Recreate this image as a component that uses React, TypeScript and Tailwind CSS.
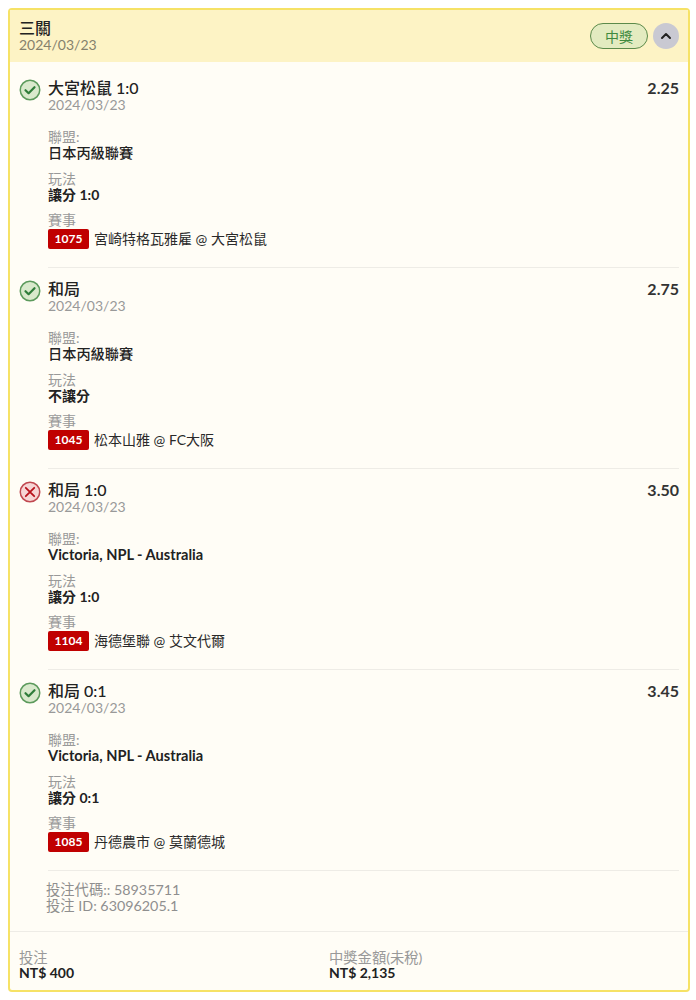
import React from 'react';
import { ChevronUp } from 'lucide-react';

interface Leg {
  title: string;
  odds: string;
  league: string;
  latin: boolean;
  play: string;
  code: string;
  match: string;
  won: boolean;
}

const legs: Leg[] = [
  { title: '大宮松鼠 1:0', odds: '2.25', league: '日本丙級聯賽', latin: false, play: '讓分 1:0', code: '1075', match: '宮崎特格瓦雅雇 @ 大宮松鼠', won: true },
  { title: '和局', odds: '2.75', league: '日本丙級聯賽', latin: false, play: '不讓分', code: '1045', match: '松本山雅 @ FC大阪', won: true },
  { title: '和局 1:0', odds: '3.50', league: 'Victoria, NPL - Australia', latin: true, play: '讓分 1:0', code: '1104', match: '海德堡聯 @ 艾文代爾', won: false },
  { title: '和局 0:1', odds: '3.45', league: 'Victoria, NPL - Australia', latin: true, play: '讓分 0:1', code: '1085', match: '丹德農市 @ 莫蘭德城', won: true },
];

const StatusIcon = ({ won }: { won: boolean }) =>
  won ? (
    <svg width="22" height="22" viewBox="0 0 22 22" fill="none">
      <circle cx="11" cy="11" r="9.75" fill="#d9e9cc" stroke="#5c9a5c" strokeWidth="1.5" />
      <path d="M6.5 11.2l3.1 3 5.9-6" stroke="#2f7d3a" strokeWidth="2.2" strokeLinecap="round" strokeLinejoin="round" />
    </svg>
  ) : (
    <svg width="22" height="22" viewBox="0 0 22 22" fill="none">
      <circle cx="11" cy="11" r="9.75" fill="#f6d5d5" stroke="#c0474f" strokeWidth="1.5" />
      <path d="M6.8 6.8l8.4 8.4M15.2 6.8l-8.4 8.4" stroke="#b8121b" strokeWidth="1.8" strokeLinecap="round" />
    </svg>
  );

const LegRow = ({ leg, last }: { leg: Leg; last: boolean }) => (
  <div className="flex">
    <div className="w-[38px] shrink-0 pl-[8.5px]">
      <StatusIcon won={leg.won} />
    </div>
    <div className={`flex-1 pb-[18px] ${last ? '' : 'mb-[12px]'} border-b border-[#eeece6]`}>
      <div className="flex justify-between">
        <div>
          <div className="text-[16px] leading-[18px] font-medium text-[#222]">{leg.title}</div>
          <div className="text-[14px] leading-[15px] text-[#999]">2024/03/23</div>
        </div>
        <div className="text-[16px] leading-[18px] font-bold text-[#333]">{leg.odds}</div>
      </div>
      <div className="mt-[17px] text-[14px] leading-[16px] text-[#999]">聯盟:</div>
      <div className={`${leg.latin ? 'text-[14.6px] font-bold' : 'text-[14.2px] font-medium'} leading-[16px] text-[#222]`}>{leg.league}</div>
      <div className="mt-[10px] text-[14px] leading-[16px] text-[#999]">玩法</div>
      <div className="text-[14px] leading-[16px] font-bold text-[#222]">{leg.play}</div>
      <div className="mt-[9px] text-[14px] leading-[16px] text-[#999]">賽事</div>
      <div className="flex items-center gap-[5px] mt-[1px]">
        <span className="w-[41px] h-[20px] flex items-center justify-center rounded-[2px] bg-[#c00000] text-white text-[12px] font-bold">{leg.code}</span>
        <span className="text-[14px] leading-[20px] text-[#2a2a2a]">{leg.match}</span>
      </div>
    </div>
  </div>
);

export default function App() {
  return (
    <div className="w-[696px] h-[1000px] bg-white p-[8px]" style={{ fontFamily: 'Lato, "Noto Sans CJK TC", sans-serif' }}>
      <div className="h-[984px] w-[682px] flex flex-col border-2 border-[#f6e266] rounded-[4px] bg-[#fffdf6]">
        <div className="h-[52px] shrink-0 bg-[#fdf3c5] flex items-center justify-between pl-[9px] pr-[9px]">
          <div className="-mt-[1px]">
            <div className="text-[16px] leading-[18px] font-medium text-[#222]">三關</div>
            <div className="text-[14px] leading-[16px] text-[#85816c]">2024/03/23</div>
          </div>
          <div className="flex items-center gap-[5px]">
            <span className="w-[58px] h-[26px] flex items-center justify-center rounded-full border border-[#5c8a4a] bg-[#e3ebc0] text-[14px] text-[#3f8a3f]">中獎</span>
            <span className="w-[26px] h-[26px] flex items-center justify-center rounded-full bg-[#c9c9d2] text-[#222]">
              <ChevronUp size={16} strokeWidth={3} />
            </span>
          </div>
        </div>
        <div className="flex-1 flex flex-col pt-[17px] pr-[9px]">
          {legs.map((leg, i) => (
            <LegRow key={leg.code} leg={leg} last={i === legs.length - 1} />
          ))}
          <div className="pl-[36px] pt-[11px] text-[14.3px] leading-[16px] text-[#8f8f8f]">
            <div>投注代碼:: 58935711</div>
            <div>投注 ID: 63096205.1</div>
          </div>
        </div>
        <div className="h-[59px] shrink-0 border-t border-[#eeece6] flex pt-[18px] pl-[9px]">
          <div className="w-[310px]">
            <div className="text-[14.3px] leading-[15px] text-[#999]">投注</div>
            <div className="text-[14px] leading-[15px] font-bold text-[#222]">NT$ 400</div>
          </div>
          <div>
            <div className="text-[14.3px] leading-[15px] text-[#999]">中獎金額(未稅)</div>
            <div className="text-[14px] leading-[15px] font-bold text-[#222]">NT$ 2,135</div>
          </div>
        </div>
      </div>
    </div>
  );
}
